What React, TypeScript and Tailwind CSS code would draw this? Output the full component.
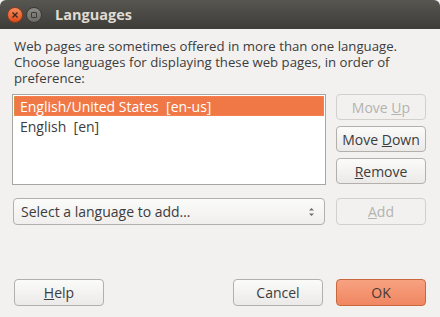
import React from "react";

const font = { fontFamily: '"Open Sans", "DejaVu Sans", sans-serif' };

function Btn({
  children,
  disabled,
  primary,
  className = "",
}: {
  children: React.ReactNode;
  disabled?: boolean;
  primary?: boolean;
  className?: string;
}) {
  const base =
    "flex items-center justify-center rounded-[4px] border text-[14px] h-[26px]";
  const look = primary
    ? "border-[#c8683e] bg-gradient-to-b from-[#f7a281] to-[#f08661] text-[#4a3a33]"
    : disabled
    ? "border-[#d3d0cc] bg-[#f2f1f0] text-[#b5b3af]"
    : "border-[#b3b0ab] bg-gradient-to-b from-[#fbfbfa] to-[#ebeae8] text-[#3c3c3c]";
  return <div className={`${base} ${look} ${className}`}>{children}</div>;
}

export default function App() {
  return (
    <div
      className="w-[440px] h-[317px] bg-[#f2f1f0] flex flex-col overflow-hidden"
      style={font}
    >
      {/* Title bar */}
      <div className="h-[29px] shrink-0 bg-gradient-to-b from-[#575651] to-[#3d3c38] rounded-t-[6px] flex items-center pl-[7px]">
        <div className="w-[16px] h-[16px] rounded-full bg-gradient-to-b from-[#f68c5d] to-[#df4a16] border border-[#8d3a17] flex items-center justify-center mt-[1px]">
          <svg width="8" height="8" viewBox="0 0 8 8">
            <path d="M1.5 1.5 L6.5 6.5 M6.5 1.5 L1.5 6.5" stroke="#3c2a20" strokeWidth="1.4" />
          </svg>
        </div>
        <div className="ml-[3px] w-[16px] h-[16px] rounded-full bg-gradient-to-b from-[#8c8b86] to-[#6c6b67] border border-[#3a3935] flex items-center justify-center mt-[1px]">
          <div className="w-[6px] h-[6px] border border-[#3a3935] rounded-[1px]" />
        </div>
        <div className="ml-[13px] text-[14.5px] font-bold text-[#dfdbd2] leading-none mt-[1px]">
          Languages
        </div>
      </div>

      {/* Body */}
      <div className="flex flex-col pl-[12px] pr-[14px] pt-[9px] text-[#3c3c3c]">
        <div className="text-[13.2px] leading-[16px] pl-[2px]">
          Web pages are sometimes offered in more than one language.
          <br />
          Choose languages for displaying these web pages, in order of
          <br />
          preference:
        </div>

        <div className="flex mt-[8px] gap-[10px]">
          <div className="w-[314px] h-[91px] bg-white border border-[#a9a6a1] p-[1px] text-[14px]">
            <div className="h-[20px] bg-[#f07746] text-white flex items-center pl-[5px] border border-dotted border-[#c9a24d]">
              English/United States&nbsp;&nbsp;[en-us]
            </div>
            <div className="h-[20px] flex items-center pl-[6px] text-[#3c3c3c]">
              English&nbsp;&nbsp;[en]
            </div>
          </div>
          <div className="flex flex-col gap-[6px] w-[90px]">
            <Btn disabled>
              Move&nbsp;<span className="underline">U</span>p
            </Btn>
            <Btn>
              Move&nbsp;<span className="underline">D</span>own
            </Btn>
            <Btn>
              <span className="underline">R</span>emove
            </Btn>
          </div>
        </div>

        <div className="flex mt-[13px] gap-[11px] items-center">
          <div className="w-[312px] h-[27px] ml-[1px] rounded-[4px] border border-[#b3b0ab] bg-gradient-to-b from-[#fbfbfa] to-[#f0efee] flex items-center justify-between px-[7px] text-[14px] text-[#3c3c3c]">
            <span>Select a language to add…</span>
            <svg width="7" height="12" viewBox="0 0 7 12" className="mr-[2px]">
              <path d="M1 4.5 L3.5 2 L6 4.5 Z" fill="#6e6d69" />
              <path d="M1 7.5 L3.5 10 L6 7.5 Z" fill="#6e6d69" />
            </svg>
          </div>
          <Btn disabled className="w-[90px] h-[27px]">
            <span className="underline">A</span>dd
          </Btn>
        </div>

        <div className="flex mt-[54px] items-center">
          <Btn className="w-[90px] ml-[2px] h-[27px]">
            <span className="underline">H</span>elp
          </Btn>
          <Btn className="w-[90px] ml-auto h-[27px]">Cancel</Btn>
          <Btn primary className="w-[90px] ml-[13px] h-[27px]">
            OK
          </Btn>
        </div>
      </div>
    </div>
  );
}
